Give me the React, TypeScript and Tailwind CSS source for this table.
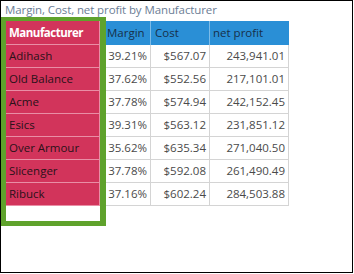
import React from 'react';

const rows = [
  { name: 'Adihash', margin: '39.21%', cost: '$567.07', profit: '243,941.01' },
  { name: 'Old Balance', margin: '37.62%', cost: '$552.56', profit: '217,101.01' },
  { name: 'Acme', margin: '37.78%', cost: '$574.94', profit: '242,152.45' },
  { name: 'Esics', margin: '39.31%', cost: '$563.12', profit: '231,851.12' },
  { name: 'Over Armour', margin: '35.62%', cost: '$635.34', profit: '271,040.50' },
  { name: 'Slicenger', margin: '37.78%', cost: '$592.08', profit: '261,490.49' },
  { name: 'Ribuck', margin: '37.16%', cost: '$602.24', profit: '284,503.88' },
];

export default function App() {
  return (
    <div className="w-[353px] h-[273px] border border-black bg-white font-['Open_Sans',sans-serif] text-[11.5px] leading-none">
      {/* Title */}
      <div className="h-[16px] pl-[4px] pt-[3px] text-[#6b7d95] whitespace-nowrap tracking-[-0.1px]">
        Margin, Cost, net profit by Manufacturer
      </div>

      <div className="flex">
        {/* Highlighted Manufacturer column */}
        <div className="w-[105px] h-[209px] border-[#5fa22c] border-l-[5px] border-t-[4px] border-r-[6px] border-b-[5px] flex flex-col">
          <div className="h-[24px] bg-[#d2345b] border-b border-r border-[#e98ea5] flex items-center pl-[3px] text-white font-bold tracking-[-0.5px]">
            Manufacturer
          </div>
          {rows.map((r) => (
            <div
              key={r.name}
              className="h-[23px] bg-[#d2345b] border-b border-r border-[#e98ea5] flex items-center pl-[3px] text-[#2a1219]"
            >
              {r.name}
            </div>
          ))}
        </div>

        {/* Rest of the table */}
        <div className="mt-[4px] w-[183px] flex flex-col">
          <div className="h-[24px] bg-[#2a8fd6] flex text-[#17304a]">
            <div className="w-[45px] border-r border-[#7cbbe8] flex items-center pl-[1px]">Margin</div>
            <div className="w-[59px] border-r border-[#7cbbe8] flex items-center pl-[4px]">Cost</div>
            <div className="w-[79px] flex items-center pl-[3px]">net profit</div>
          </div>
          {rows.map((r) => (
            <div key={r.name} className="h-[23px] flex border-b border-[#d4d4d4] text-[#4a4a4a]">
              <div className="w-[45px] border-r border-[#d4d4d4] flex items-center justify-end pr-[3px]">{r.margin}</div>
              <div className="w-[59px] border-r border-[#d4d4d4] flex items-center justify-end pr-[3px]">{r.cost}</div>
              <div className="w-[79px] border-r border-[#d4d4d4] flex items-center justify-end pr-[3px]">{r.profit}</div>
            </div>
          ))}
        </div>
      </div>
    </div>
  );
}
